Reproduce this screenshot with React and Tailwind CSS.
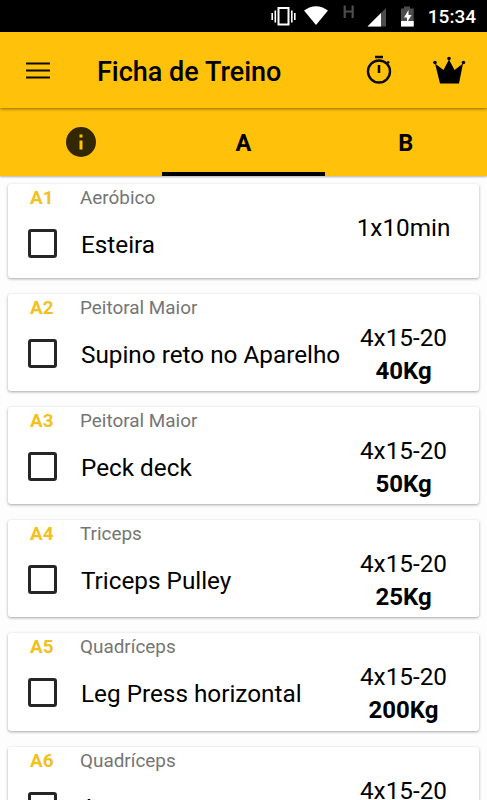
import React from 'react';

const exercises = [
  { id: 'A1', group: 'Aeróbico', name: 'Esteira', sets: '1x10min' },
  { id: 'A2', group: 'Peitoral Maior', name: 'Supino reto no Aparelho', sets: '4x15-20', load: '40Kg' },
  { id: 'A3', group: 'Peitoral Maior', name: 'Peck deck', sets: '4x15-20', load: '50Kg' },
  { id: 'A4', group: 'Triceps', name: 'Triceps Pulley', sets: '4x15-20', load: '25Kg' },
  { id: 'A5', group: 'Quadríceps', name: 'Leg Press horizontal', sets: '4x15-20', load: '200Kg' },
  { id: 'A6', group: 'Quadríceps', name: 'Avanço', sets: '4x15-20' },
];

function StatusBar() {
  return (
    <div className="relative h-8 shrink-0 bg-black">
      <svg className="block h-8 w-full" viewBox="0 0 487 32" fill="none">
        <rect x="278.5" y="8" width="10" height="16.5" stroke="#fff" strokeWidth="2" />
        <path d="M275.3 10.5v12M272.2 13v7M291.8 10.5v12M294.8 13v7" stroke="#fff" strokeWidth="1.6" />
        <path d="M304 10.5Q316 2 328 10.5L316 25Z" fill="#fff" />
        <path d="M344.7 5.5v12.500M352.7 5.500v12.500M344.700 11.500h8" stroke="#4d4d4d" strokeWidth="2.200" />
        <path d="M386 8V26.5H367.500Z" fill="#4d4d4d" />
        <path d="M381 13V26.500H367.500Z" fill="#fff" />
        <path d="M404 6.500h6v2h3.700v18H401v-18h3Z" fill="#4d4d4d" />
        <path d="M401 21h12.700v5.500H401Z" fill="#fff" />
        <path d="M408.500 10L404 17.500h3v5l4.500-7.500h-3Z" fill="#fff" />
      </svg>
      <span className="absolute right-[11px] top-[5px] text-[19px] leading-6 font-medium text-white">15:34</span>
    </div>
  );
}

function Toolbar() {
  return (
    <header className="relative z-10 flex h-[76px] shrink-0 items-center bg-[#ffc10a] shadow-[0_1px_3px_rgba(0,0,0,0.45)]">
      <svg className="ml-[26px] h-[18px] w-6" viewBox="0 0 24 18" stroke="#0d0a00" strokeWidth="2.200">
        <path d="M0 2.500h24M0 9.500h24M0 16.500h24" />
      </svg>
      <h1 className="ml-[47px] flex-1 whitespace-nowrap pt-[3px] text-[27px] leading-8 font-medium text-black">Ficha de Treino</h1>
      <svg className="mr-[39px] h-8 w-7" viewBox="0 0 28 32" fill="none" stroke="#0d0a00">
        <circle cx="14" cy="17.500" r="11" strokeWidth="2.400" />
        <path d="M10 3h8M14 11v8" strokeWidth="2.500" />
        <path d="M21.500 10l2.500-2.500" strokeWidth="2.400" />
      </svg>
      <svg className="mr-[21px] h-8 w-[34px]" viewBox="0 0 34 32" fill="#000">
        <path d="M8 29.500L3 9.500l8.500 6.500L17 5.500 22.500 16l8.500-6.500L27 29.500Z" />
        <circle cx="3" cy="8.500" r="1.800" />
        <circle cx="17" cy="4.500" r="1.800" />
        <circle cx="31.500" cy="8.500" r="1.800" />
      </svg>
    </header>
  );
}

function Tabs() {
  return (
    <nav className="relative grid h-[68px] shrink-0 grid-cols-3 bg-[#ffc10a] text-[23.5px] font-bold text-black shadow-[0_1px_2px_rgba(0,0,0,0.3)]">
      <div className="flex items-center justify-center">
        <svg className="h-[30px] w-[30px]" viewBox="0 0 30 30">
          <circle cx="15" cy="15" r="15" fill="#332702" />
          <path d="M13.500 7.500h3v3h-3zM13.500 13.500h3v9h-3z" fill="#ffc10a" />
        </svg>
      </div>
      <div className="flex items-center justify-center border-b-4 border-black pt-2">A</div>
      <div className="flex items-center justify-center pt-1">B</div>
    </nav>
  );
}

function ExerciseCard({ item }) {
  return (
    <article
      className={`flex shrink-0 rounded-[3px] bg-white shadow-[0_1px_3px_rgba(0,0,0,0.35)] ${item.load ? 'h-[97.3px]' : 'h-[94px]'}`}
    >
      <div className="w-[73px] shrink-0 pl-[22px] pt-0.5">
        <div className="text-[18.9px] leading-6 font-bold text-[#f4c01e]">{item.id}</div>
        <div className="-ml-[2.500px] mt-[19px] h-[29px] w-[29px] rounded-[3px] border-3 border-[#262626]" />
      </div>
      <div className="min-w-0 flex-1 whitespace-nowrap pt-0.5">
        <div className="-ml-px text-[18.9px] leading-6 text-[#757575]">{item.group}</div>
        <div className="mt-[19px] text-[24.3px] leading-8 text-black">{item.name}</div>
      </div>
      <div className="w-[151px] shrink-0 pt-[27px] text-center text-[24.3px] leading-[33px] text-black">
        <div>{item.sets}</div>
        {item.load && <div className="pt-px text-[24px] font-bold">{item.load}</div>}
      </div>
    </article>
  );
}

export default function App() {
  return (
    <div className="flex h-[800px] w-[487px] flex-col overflow-hidden bg-[#fdfdfd] font-[Roboto,sans-serif]">
      <StatusBar />
      <Toolbar />
      <Tabs />
      <main className="flex min-h-0 flex-1 flex-col gap-4 overflow-hidden px-2 pt-[7.500px]">
        {exercises.map((item) => (
          <ExerciseCard key={item.id} item={item} />
        ))}
      </main>
    </div>
  );
}
